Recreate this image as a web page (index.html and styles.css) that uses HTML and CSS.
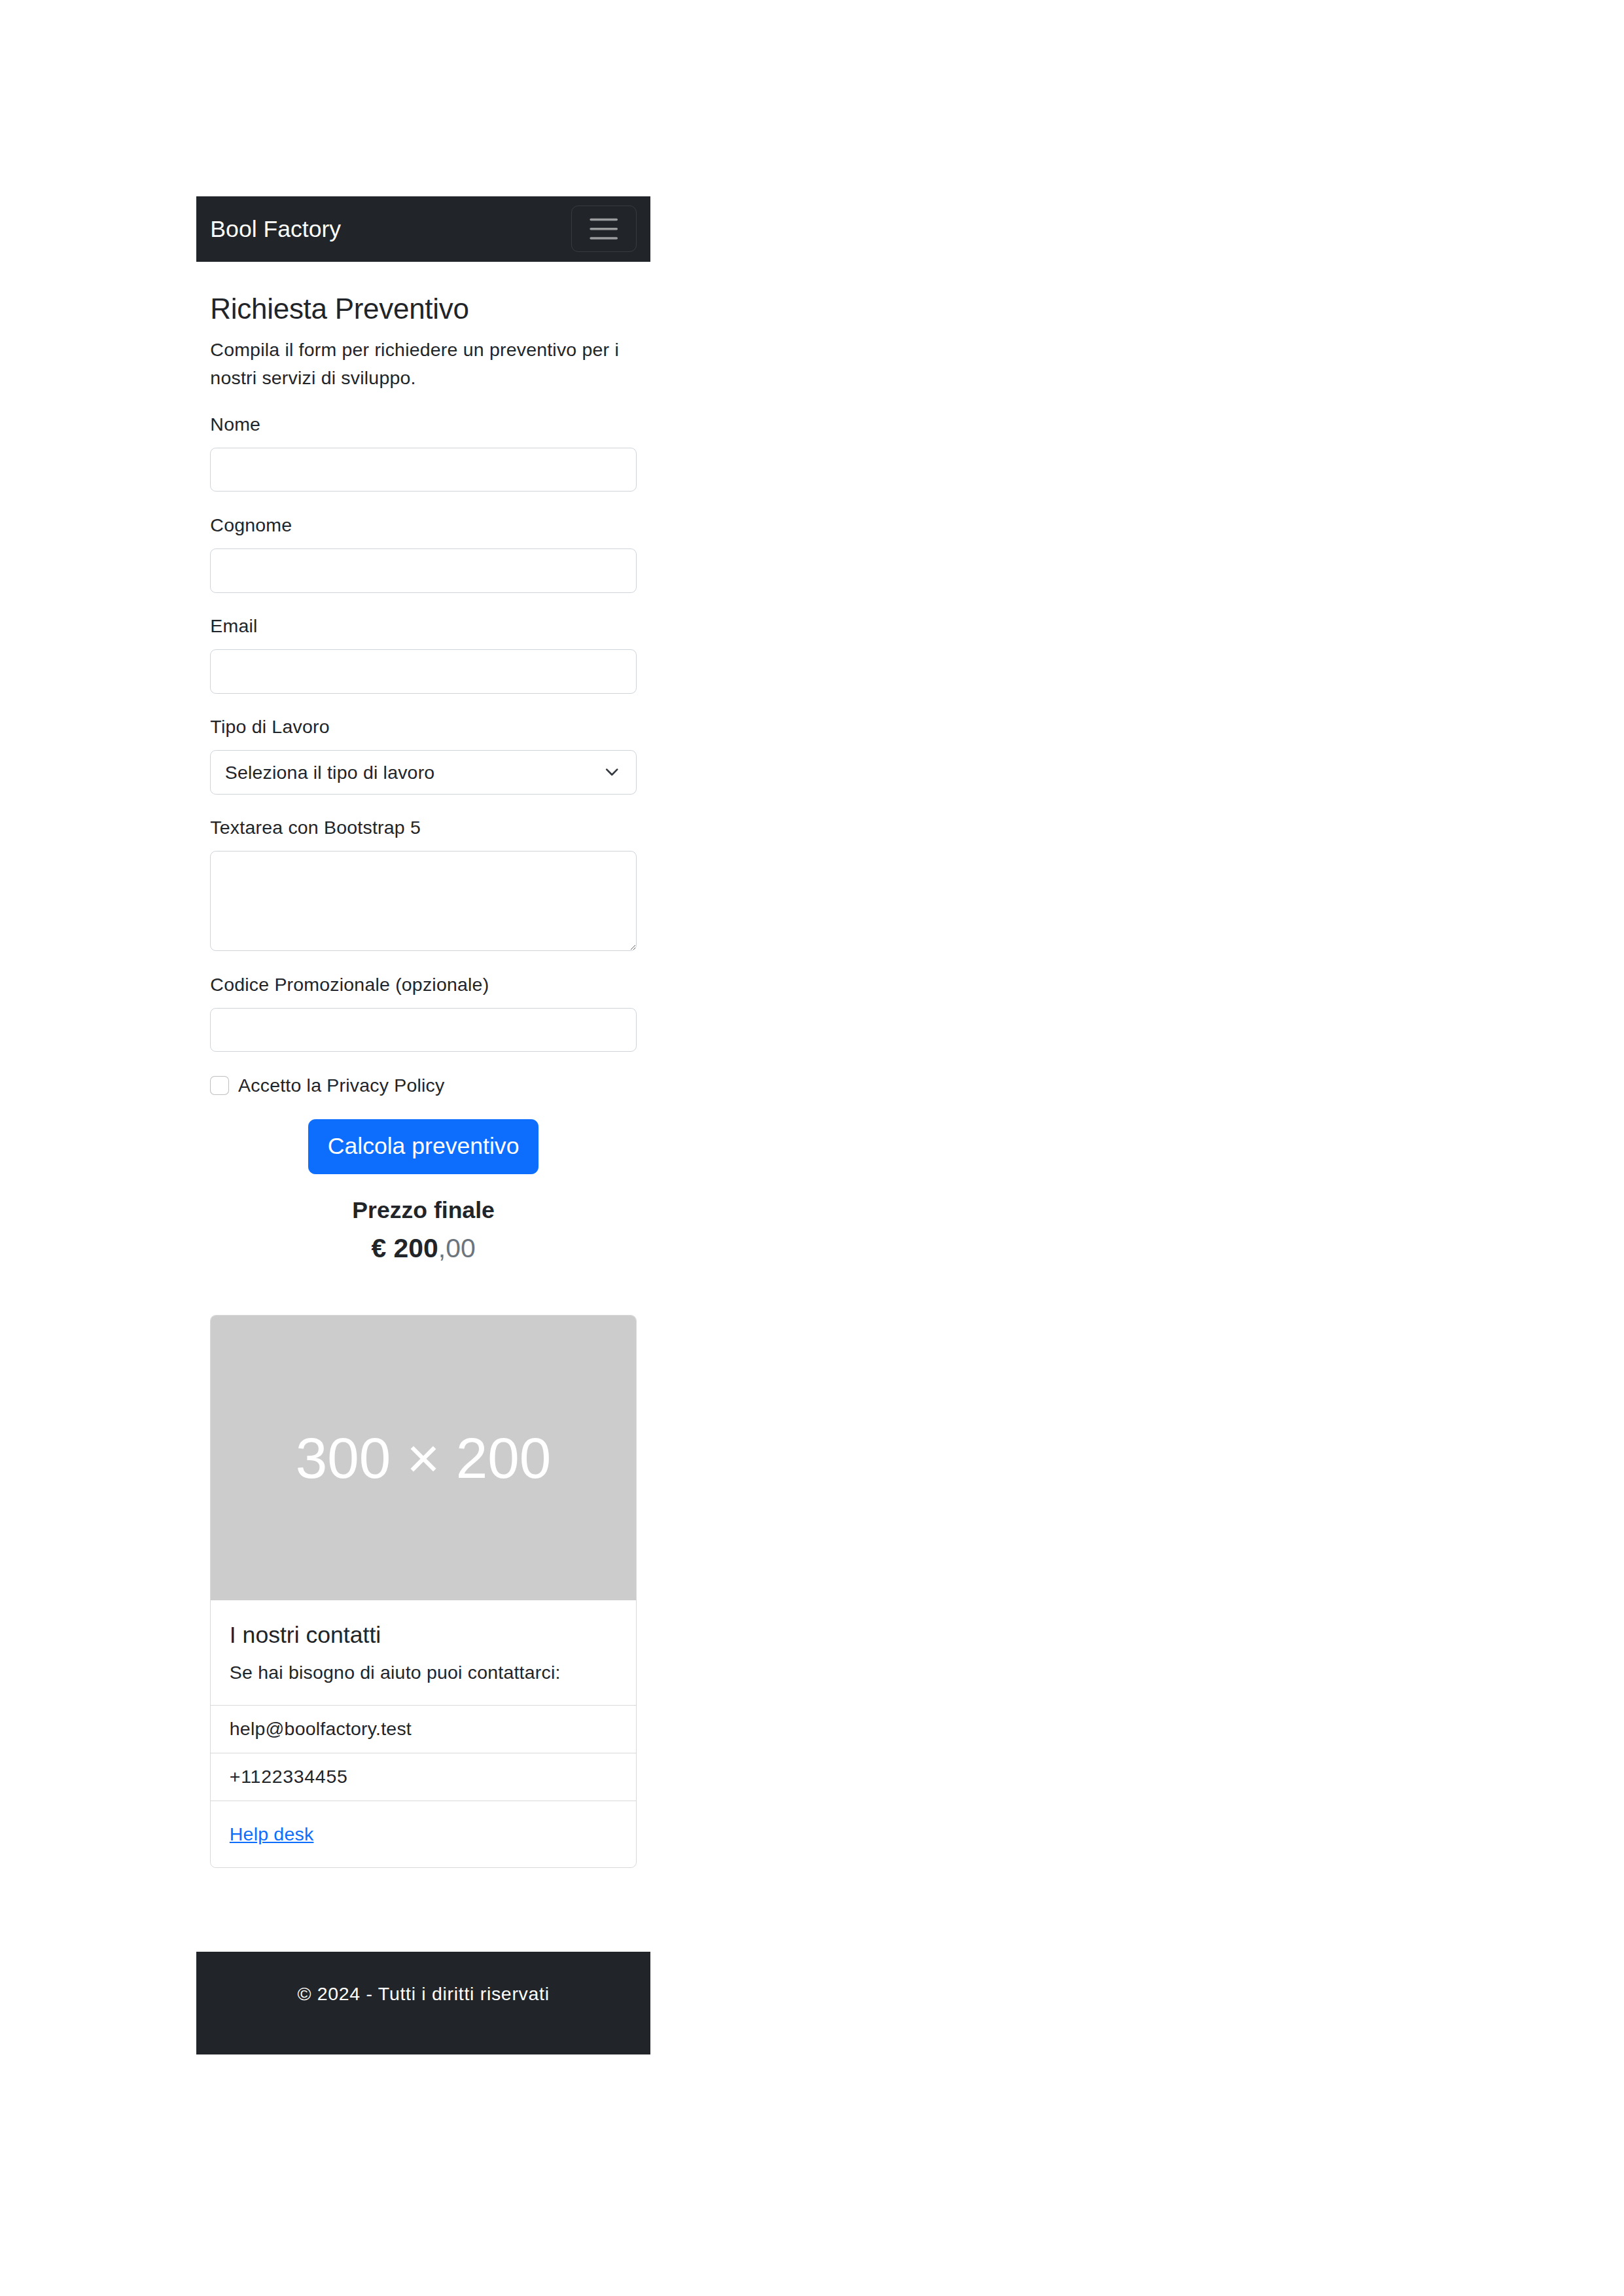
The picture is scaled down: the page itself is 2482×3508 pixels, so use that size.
FILE: index.html
```html
<!DOCTYPE html>
<html lang="it">
<head>
<meta charset="utf-8">
<title>Bool Factory - Richiesta Preventivo</title>
<link rel="stylesheet" href="styles.css">
</head>
<body>
<div class="sheet">
  <div class="app">
    <nav class="navbar">
      <span class="brand">Bool Factory</span>
      <button class="toggler" type="button" aria-label="Menu">
        <svg class="toggler-icon" viewBox="0 0 30 30" width="30" height="30"><path d="M4 7h22M4 15h22M4 23h22" stroke="rgba(255,255,255,0.55)" stroke-width="2" stroke-linecap="round" stroke-miterlimit="10" fill="none"/></svg>
      </button>
    </nav>

    <main class="container">
      <h2 class="title">Richiesta Preventivo</h2>
      <p class="intro">Compila il form per richiedere un preventivo per i nostri servizi di sviluppo.</p>

      <form class="form">
        <div class="field">
          <label class="label">Nome</label>
          <input class="control" type="text">
        </div>
        <div class="field">
          <label class="label">Cognome</label>
          <input class="control" type="text">
        </div>
        <div class="field">
          <label class="label">Email</label>
          <input class="control" type="email">
        </div>
        <div class="field">
          <label class="label">Tipo di Lavoro</label>
          <div class="select-wrap">
            <select class="control select">
              <option>Seleziona il tipo di lavoro</option>
            </select>
            <svg class="chevron" viewBox="0 0 16 16" width="16" height="12"><path d="M2 5l6 6 6-6" fill="none" stroke="#343a40" stroke-width="2" stroke-linecap="round" stroke-linejoin="round"/></svg>
          </div>
        </div>
        <div class="field">
          <label class="label">Textarea con Bootstrap 5</label>
          <textarea class="control area" rows="3"></textarea>
        </div>
        <div class="field">
          <label class="label">Codice Promozionale (opzionale)</label>
          <input class="control" type="text">
        </div>
        <div class="check">
          <span class="check-box"></span>
          <span class="check-label">Accetto la Privacy Policy</span>
        </div>
        <div class="actions">
          <button class="btn" type="button">Calcola preventivo</button>
        </div>
      </form>

      <div class="price">
        <h5 class="price-title">Prezzo finale</h5>
        <p class="amount">€ 200<span class="cents">,00</span></p>
      </div>

      <div class="card">
        <div class="card-img"><span>300 × 200</span></div>
        <div class="card-body card-body-top">
          <h5 class="card-title">I nostri contatti</h5>
          <p class="card-text">Se hai bisogno di aiuto puoi contattarci:</p>
        </div>
        <ul class="list">
          <li class="list-item">help@boolfactory.test</li>
          <li class="list-item num">+1122334455</li>
        </ul>
        <div class="card-body card-body-end">
          <a class="card-link" href="#">Help desk</a>
        </div>
      </div>
    </main>

    <footer class="footer">
      <p class="footer-text">© 2024 - Tutti i diritti riservati</p>
    </footer>
  </div>
</div>
</body>
</html>
```

FILE: styles.css
```css
* {
  box-sizing: border-box;
}

html, body {
  margin: 0;
  padding: 0;
  background: #ffffff;
}

body {
  font-family: "Liberation Sans", Arial, sans-serif;
  color: #212529;
}

.sheet {
  padding: 300px 0 0 300px;
  min-height: 3508px;
}

.app {
  zoom: 1.78;
  width: 390px;
  font-size: 16px;
  line-height: 1.5;
  letter-spacing: 0.12px;
}

/* Navbar */
.navbar {
  background: #212529;
  height: 56px;
  padding: 8px 12px;
  display: flex;
  align-items: center;
  justify-content: space-between;
}

.brand {
  color: #ffffff;
  font-size: 20px;
  line-height: 30px;
  letter-spacing: 0;
  padding-top: 1px;
}

.toggler {
  display: flex;
  align-items: center;
  justify-content: center;
  width: 56px;
  height: 40px;
  padding: 4px 12px;
  background: transparent;
  border: 1px solid rgba(255, 255, 255, 0.1);
  border-radius: 6px;
}

.toggler-icon {
  display: block;
  width: 30px;
  height: 30px;
}

/* Container */
.container {
  padding: 0 12px;
  margin-top: 26px;
}

.title {
  font-size: 24.7px;
  font-weight: 500;
  line-height: 1.2;
  letter-spacing: -0.15px;
  margin: 0 0 8px;
}

.intro {
  margin: 0 0 16px;
}

/* Form */
.field {
  margin-bottom: 16.6px;
}

.label {
  display: block;
  margin-bottom: 8px;
}

.control {
  display: block;
  width: 100%;
  height: 38px;
  padding: 6px 12px;
  font-family: inherit;
  font-size: 16px;
  line-height: 24px;
  letter-spacing: 0.12px;
  color: #212529;
  background: #ffffff;
  border: 1px solid #ced4da;
  border-radius: 5px;
  appearance: none;
  -webkit-appearance: none;
  margin: 0;
}

.select-wrap {
  position: relative;
}

.select {
  padding-right: 36px;
}

.chevron {
  position: absolute;
  right: 13px;
  top: 13px;
  width: 16px;
  height: 12px;
}

.area {
  height: 86px;
  resize: vertical;
}

.check {
  display: flex;
  align-items: flex-start;
  line-height: 24px;
  margin-bottom: 17px;
}

.check-box {
  flex: none;
  width: 16px;
  height: 16px;
  margin-top: 4px;
  margin-right: 8px;
  border: 1px solid rgba(0, 0, 0, 0.25);
  border-radius: 4px;
  background: #ffffff;
}

.actions {
  display: flex;
  justify-content: center;
}

.btn {
  font-family: inherit;
  font-size: 20px;
  line-height: 30px;
  letter-spacing: 0;
  padding: 8px 16px;
  color: #ffffff;
  background: #0d6efd;
  border: 1px solid #0d6efd;
  border-radius: 6px;
}

/* Price */
.price {
  text-align: center;
  margin-top: 19px;
}

.price-title {
  font-size: 20px;
  font-weight: 700;
  line-height: 24px;
  letter-spacing: 0;
  margin: 0 0 7px;
}

.amount {
  font-size: 23px;
  font-weight: 700;
  line-height: 28px;
  letter-spacing: 0;
  margin: 0;
}

.cents {
  font-weight: 400;
  color: #6c757d;
}

/* Card */
.card {
  margin-top: 43px;
  border: 1px solid rgba(0, 0, 0, 0.15);
  border-radius: 5px;
  overflow: hidden;
}

.card-img {
  height: 244px;
  background: #cccccc;
  display: flex;
  align-items: center;
  justify-content: center;
}

.card-img span {
  color: #ffffff;
  font-size: 49px;
  line-height: 1;
  letter-spacing: 0;
}

.card-body {
  padding: 16px;
}

.card-body-top {
  padding-top: 18px;
}

.card-body-end {
  padding: 16.5px 16px;
}

.card-title {
  font-size: 20px;
  font-weight: 500;
  line-height: 1.2;
  letter-spacing: 0;
  margin: 0 0 8px;
}

.card-text {
  margin: 0;
}

.list {
  list-style: none;
  margin: 0;
  padding: 0;
}

.list-item {
  padding: 8.25px 16px;
  border-top: 1px solid rgba(0, 0, 0, 0.15);
}

.list-item:last-child {
  border-bottom: 1px solid rgba(0, 0, 0, 0.15);
}

.num {
  letter-spacing: 0.4px;
}

.card-link {
  color: #0d6efd;
  text-decoration: underline;
}

/* Footer */
.footer {
  margin-top: 72px;
  background: #212529;
  padding: 24px 0;
  text-align: center;
}

.footer-text {
  color: #ffffff;
  margin: 0 0 16px;
  letter-spacing: 0.4px;
}
```
